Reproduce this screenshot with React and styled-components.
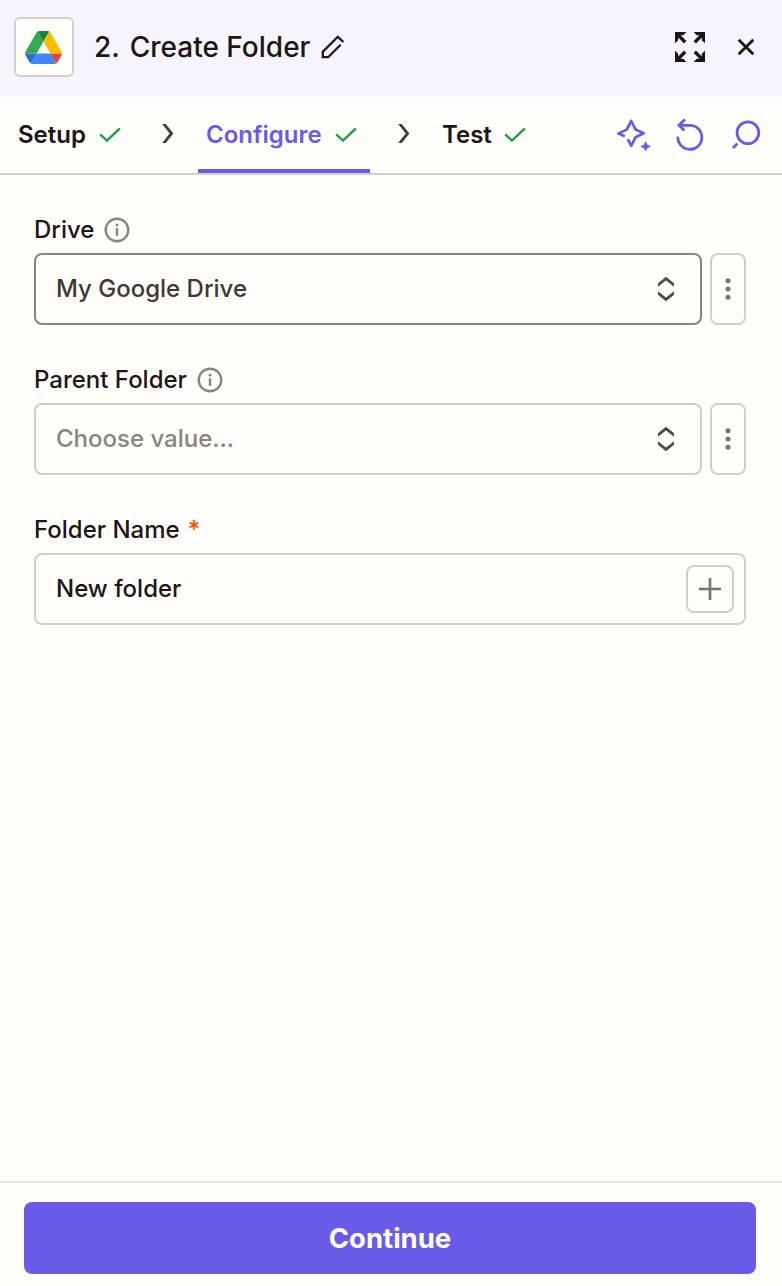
import React from 'react'
import styled, { createGlobalStyle } from 'styled-components'


const fields = [
    { label: 'Drive', value: 'My Google Drive', info: true, active: true },
    { label: 'Parent Folder', placeholder: 'Choose value...', info: true },
]

function DriveLogo() {
    return (
        <svg width="37" height="33" viewBox="0 0 87.3 78">
            <path d="m6.6 66.85 3.85 6.65c.8 1.4 1.95 2.5 3.3 3.3l13.75-23.8h-27.5c0 1.55.4 3.1 1.2 4.5z" fill="#3367d6" />
            <path d="m43.65 25-13.75-23.8c-1.35.8-2.5 1.9-3.3 3.3l-25.4 44a9.06 9.06 0 0 0 -1.2 4.5h27.5z" fill="#34a853" />
            <path d="m73.55 76.8c1.35-.8 2.5-1.9 3.3-3.3l1.6-2.75 7.65-13.25c.8-1.4 1.2-2.95 1.2-4.5h-27.5l5.85 11.5z" fill="#ea4335" />
            <path d="m43.65 25 13.75-23.8c-1.35-.8-2.9-1.2-4.5-1.2h-18.5c-1.6 0-3.15.45-4.5 1.2z" fill="#188038" />
            <path d="m59.8 53h-32.3l-13.75 23.8c1.35.8 2.9 1.2 4.5 1.2h50.8c1.6 0 3.15-.45 4.5-1.2z" fill="#4285f4" />
            <path d="m73.4 26.5-12.7-22c-.8-1.4-1.95-2.5-3.3-3.3l-13.75 23.8 16.15 28h27.45c0-1.55-.4-3.1-1.2-4.5z" fill="#fbbc04" />
        </svg>
    )
}

function PencilIcon() {
    return (
        <svg width="24" height="24" viewBox="0 0 24 24" fill="none" stroke="currentColor" strokeWidth="2.3">
            <path d="M22.4 7 16.8 1.8 1.8 16.8V22.2H7.2L19.6 9.8" />
        </svg>
    )
}

function ExpandIcon() {
    const arrow = 'M0 0H11.3L8.3 3.2H5.6L11.4 9 9 11.4 3.2 5.6V8.3L0 11.3Z'
    return (
        <svg width="30" height="30" viewBox="0 0 30 30" fill="currentColor">
            <path d={arrow} />
            <path d={arrow} transform="rotate(90 15 15)" />
            <path d={arrow} transform="rotate(180 15 15)" />
            <path d={arrow} transform="rotate(270 15 15)" />
        </svg>
    )
}

function CloseIcon() {
    return (
        <svg width="18" height="18" viewBox="0 0 18 18" stroke="currentColor" strokeWidth="2.8">
            <path d="M1.7 1.7 16.3 16.3M16.3 1.7 1.7 16.3" />
        </svg>
    )
}

function CheckIcon() {
    return (
        <svg width="22" height="16" viewBox="0 0 22 16" fill="none" stroke="#2a9d48" strokeWidth="2.5">
            <path d="M1.2 7.4 8 13.6 20.8 1.5" />
        </svg>
    )
}

function ChevronIcon() {
    return (
        <svg width="12" height="19" viewBox="0 0 12 19" fill="none" stroke="#403d3a" strokeWidth="2.8">
            <path d="M1 -1.2 9.6 9.5 1 20.2" />
        </svg>
    )
}

function SparkleIcon() {
    return (
        <svg width="34" height="32" viewBox="0 0 34 32" fill="none" stroke="currentColor" strokeWidth="2.7" strokeLinejoin="round">
            <path d="M7.8 17.2 1.5 14.4 9.7 10.6 14.2 2 18.6 10.6 26.6 14.3 18.6 18.2 14.2 26.8 10.8 20.1" />
            <path d="M28.6 22.6 30.1 25.9 33.4 27.4 30.1 28.9 28.6 32 27.1 28.9 23.8 27.4 27.1 25.9Z" fill="currentColor" stroke="currentColor" strokeWidth="0.6" />
        </svg>
    )
}

function UndoIcon() {
    return (
        <svg width="30" height="34" viewBox="0 0 30 34" fill="none" stroke="currentColor" strokeWidth="2.8">
            <path d="M2.9 18.6A12 12 0 1 0 14.9 7.4H4.2" />
            <path d="M9.8 1.4 4 7.2 9.4 12.4" />
        </svg>
    )
}

function SearchIcon() {
    return (
        <svg width="30" height="30" viewBox="0 0 30 30" fill="none" stroke="currentColor" strokeWidth="2.8">
            <circle cx="16.9" cy="12.8" r="10.9" />
            <path d="M1.9 28 6.4 23.5" />
        </svg>
    )
}

function InfoIcon() {
    return (
        <svg width="26" height="26" viewBox="0 0 26 26" fill="none" stroke="#88857f" strokeWidth="2.4">
            <circle cx="13" cy="13" r="11.3" />
            <path d="M13 11.2V18.8" />
            <circle cx="13" cy="8" r="1.5" fill="#88857f" stroke="none" />
        </svg>
    )
}

function SortIcon() {
    return (
        <svg width="16" height="26" viewBox="0 0 16 26" fill="none" stroke="#4d4945" strokeWidth="2.8">
            <path d="M-2 10.6 8 2.6 18 10.6M-2 15.4 8 23.4 18 15.4" />
        </svg>
    )
}

function DotsIcon() {
    return (
        <svg width="6" height="22" viewBox="0 0 6 22" fill="#79756f">
            <circle cx="3" cy="2.7" r="2.5" />
            <circle cx="3" cy="11" r="2.5" />
            <circle cx="3" cy="19.2" r="2.5" />
        </svg>
    )
}

function PlusIcon() {
    return (
        <svg width="22" height="22" viewBox="0 0 22 22" stroke="#79756f" strokeWidth="2.7">
            <path d="M11 0V22M0 11H22" />
        </svg>
    )
}

function App() {
    return (
        <Panel>
            <GlobalStyle />
            <Header>
                <AppLogo>
                    <DriveLogo />
                </AppLogo>
                <Title>
                    <span>2.</span>
                    <h1>Create Folder</h1>
                    <PencilIcon />
                </Title>
                <HeaderActions>
                    <IconButton aria-label="Expand"><ExpandIcon /></IconButton>
                    <IconButton aria-label="Close"><CloseIcon /></IconButton>
                </HeaderActions>
            </Header>

            <TabBar>
                <Tab $width={124}><span>Setup</span> <CheckIcon /></Tab>
                <Separator><ChevronIcon /></Separator>
                <Tab $width={172} $active><span>Configure</span> <CheckIcon /></Tab>
                <Separator><ChevronIcon /></Separator>
                <Tab $width={105}><span>Test</span> <CheckIcon /></Tab>
                <Tools>
                    <IconButton aria-label="AI"><SparkleIcon /></IconButton>
                    <IconButton aria-label="Undo"><UndoIcon /></IconButton>
                    <IconButton aria-label="Search"><SearchIcon /></IconButton>
                </Tools>
            </TabBar>

            <Form>
                {fields.map((field) => (
                    <Field key={field.label}>
                        <Label><span>{field.label}</span> {field.info && <InfoIcon />}</Label>
                        <FieldRow>
                            <Select $active={field.active}>
                                <Value $muted={!field.value}>{field.value || field.placeholder}</Value>
                                <SortIcon />
                            </Select>
                            <MenuButton aria-label="More"><DotsIcon /></MenuButton>
                        </FieldRow>
                    </Field>
                ))}
                <Field>
                    <Label $gap={8}><span>Folder Name</span> <Required>*</Required></Label>
                    <TextBox>
                        <span>New folder</span>
                        <AddButton aria-label="Insert data"><PlusIcon /></AddButton>
                    </TextBox>
                </Field>
            </Form>

            <Footer>
                <ContinueButton>Continue</ContinueButton>
            </Footer>
        </Panel>
    )
}

export default App

const GlobalStyle = createGlobalStyle`
    * {
        box-sizing: border-box;
    }

    body {
        margin: 0;
        background-color: #fffdf9;
        color: #201515;
        font-family: Inter, "Liberation Sans", sans-serif;
    }

    svg {
        display: block;
        flex-shrink: 0;
    }

    button {
        padding: 0;
        border: none;
        background: none;
        color: inherit;
        font-family: inherit;
    }
`

const Panel = styled.div`
    display: flex;
    flex-direction: column;
    height: 1286px;
    background-color: #fffdf9;
`

const Header = styled.div`
    display: flex;
    align-items: center;
    height: 97px;
    padding: 0 18px 3px 14px;
    background-color: #f6f4ff;
`

const AppLogo = styled.div`
    display: flex;
    align-items: center;
    justify-content: center;
    width: 60px;
    height: 60px;
    padding-right: 1px;
    border: 2px solid #d2d0ca;
    border-radius: 6px;
    background-color: #fffdf9;
`

const Title = styled.div`
    display: flex;
    align-items: center;
    flex: 1;
    margin-left: 20px;
    font-size: 28px;
    font-weight: 500;
    line-height: 36px;

    h1 {
        margin: 0 11px 0 10px;
        font-size: inherit;
        font-weight: inherit;
    }
`

const HeaderActions = styled.div`
    display: flex;
    align-items: center;
    gap: 32px;
    padding-right: 9px;
`

const IconButton = styled.button`
    display: flex;
`

const TabBar = styled.div`
    display: flex;
    height: 78px;
    padding: 0 21px 0 10px;
    border-bottom: 2px solid #d2d0ca;
`

const Tab = styled.div`
    display: flex;
    align-items: center;
    justify-content: space-between;
    width: ${(props) => props.$width}px;
    padding: 3px 13px 0 8px;
    border-bottom: 4px solid ${(props) => (props.$active ? '#695be8' : 'transparent')};
    color: ${(props) => (props.$active ? '#695be8' : '#201515')};
    font-size: 24px;
    font-weight: 600;

    span {
        padding-bottom: 1px;
    }
`

const Separator = styled.div`
    display: flex;
    align-items: center;
    justify-content: center;
    width: 64px;
    padding: 0 0 3px 4px;
`

const Tools = styled.div`
    display: flex;
    align-items: center;
    gap: 26px;
    margin-left: auto;
    color: #695be8;

    button:first-child {
        margin-right: -2px;
    }
`

const Form = styled.div`
    display: flex;
    flex-direction: column;
    flex: 1;
    gap: 37px;
    padding: 37px 36px 0 34px;
`

const Field = styled.div`
    display: flex;
    flex-direction: column;
    gap: 5px;
`

const Label = styled.div`
    display: flex;
    align-items: center;
    gap: ${(props) => props.$gap || 10}px;
    height: 36px;
    font-size: 24px;
    font-weight: 500;

    span {
        padding-bottom: 2px;
    }
`

const Required = styled.span`
    color: #ff4f00;
`

const FieldRow = styled.div`
    display: flex;
    gap: 8px;
`

const Select = styled.div`
    display: flex;
    align-items: center;
    justify-content: space-between;
    flex: 1;
    height: 72px;
    padding: 0 26px 0 20px;
    border: 2px solid ${(props) => (props.$active ? '#88857f' : '#d2d0ca')};
    border-radius: 8px;
`

const Value = styled.span`
    padding-bottom: 2px;
    color: ${(props) => (props.$muted ? '#88857f' : '#413735')};
    font-size: 24px;
    font-weight: 500;
`

const MenuButton = styled.button`
    display: flex;
    align-items: center;
    justify-content: center;
    width: 36px;

    && {
        border: 2px solid #d2d0ca;
        border-radius: 8px;
    }
`

const TextBox = styled.div`
    display: flex;
    align-items: center;
    justify-content: space-between;
    height: 72px;
    padding: 0 10px 0 20px;
    border: 2px solid #d2d0ca;
    border-radius: 8px;
    font-size: 24px;
    font-weight: 500;

    span {
        padding-bottom: 2px;
    }
`

const AddButton = styled(MenuButton)`
    width: 48px;
    height: 48px;
`

const Footer = styled.div`
    height: 105px;
    padding: 19px 26px 0 24px;
    border-top: 2px solid #e8e7e3;
`

const ContinueButton = styled.button`
    width: 100%;
    height: 72px;

    && {
        border-radius: 8px;
        background-color: #695be8;
        color: #fffdf9;
        font-size: 27.5px;
        font-weight: 700;
    }
`
